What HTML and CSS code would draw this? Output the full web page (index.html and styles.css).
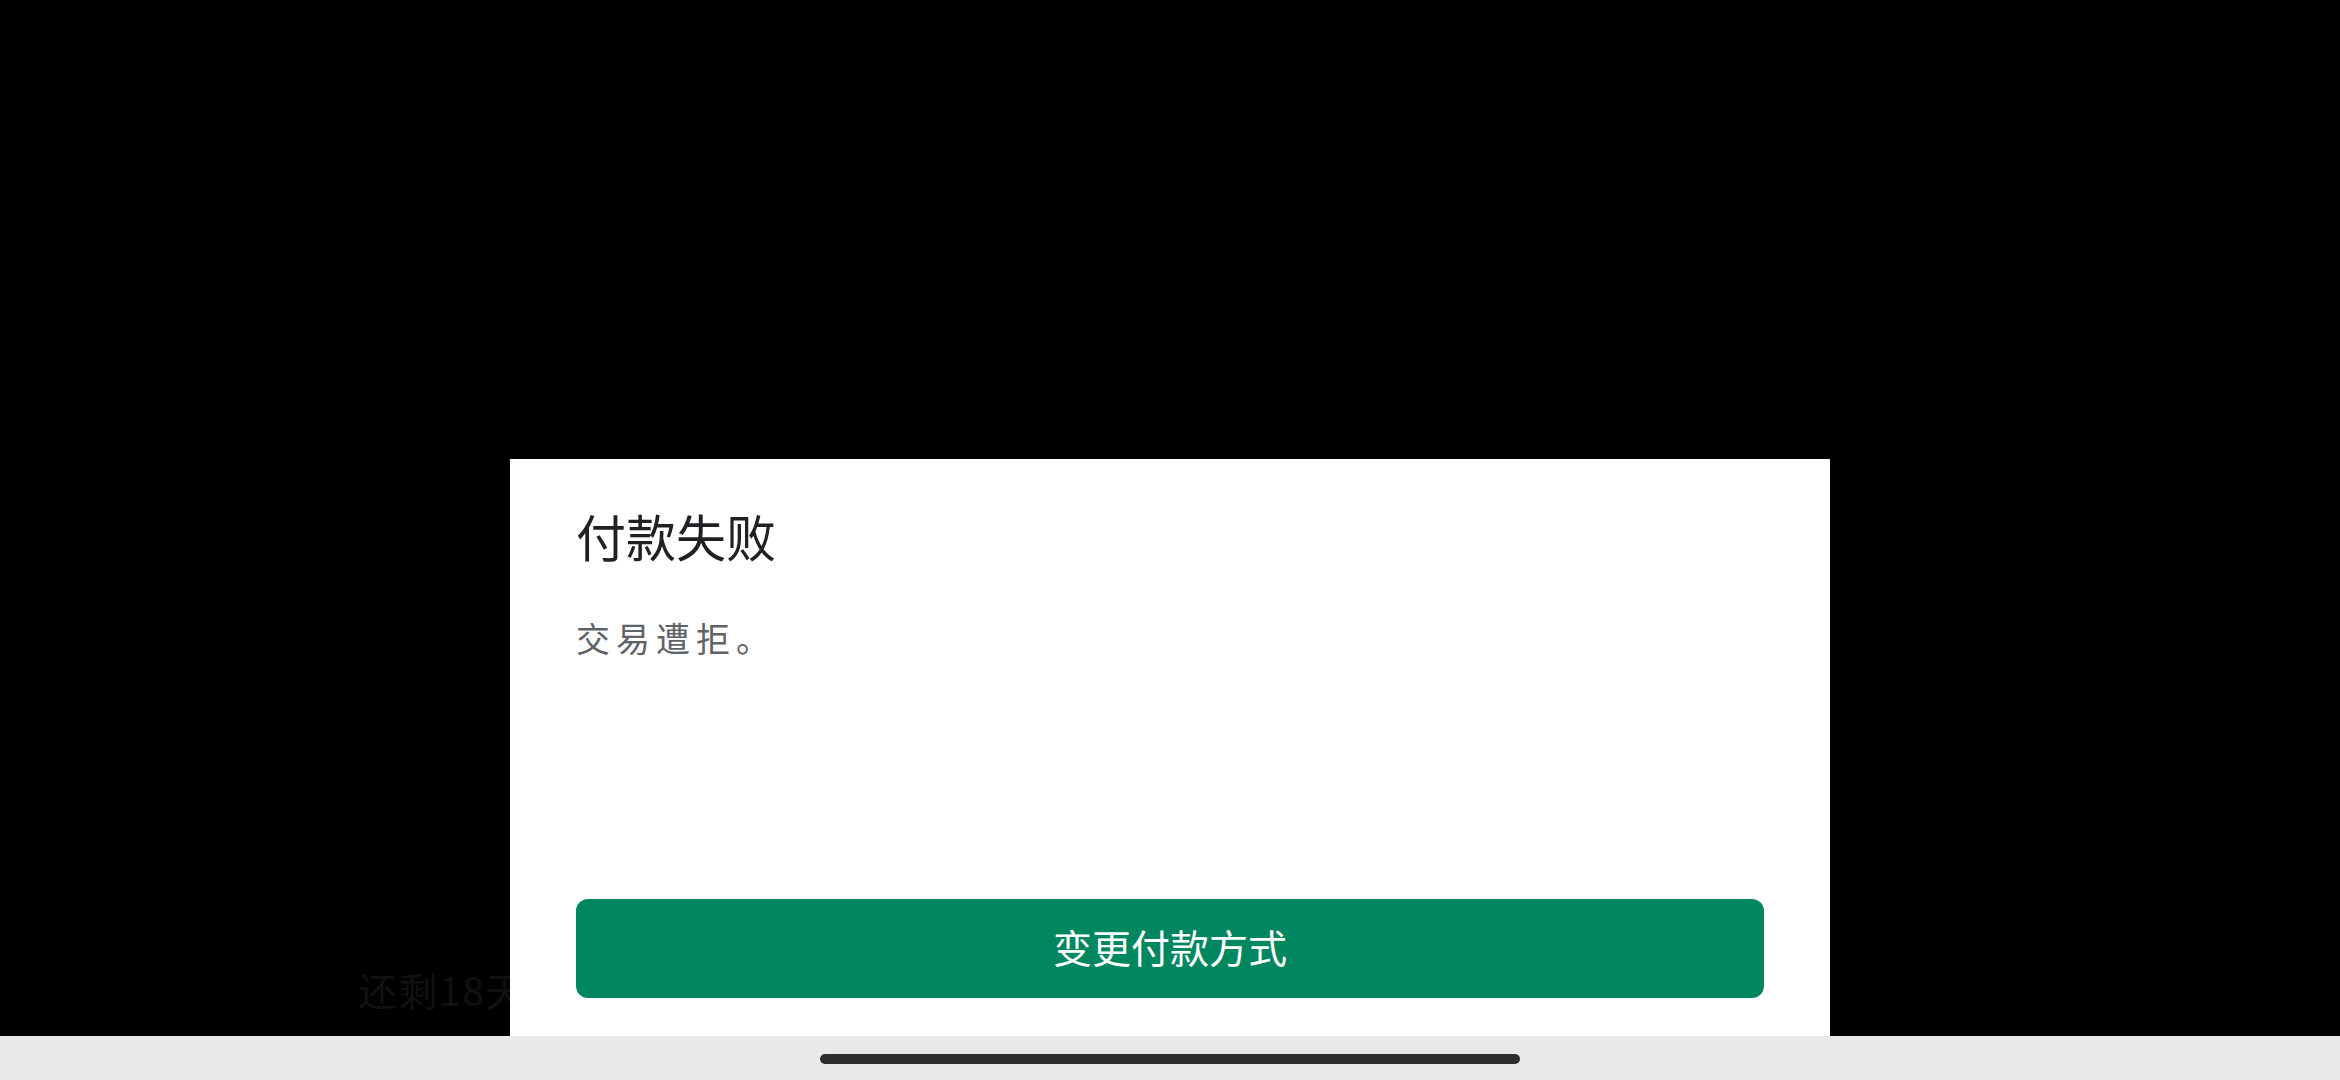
FILE: index.html
```html
<!DOCTYPE html>
<html lang="zh-CN">
<head>
<meta charset="utf-8">
<title>付款失败</title>
<link rel="stylesheet" href="styles.css">
</head>
<body>
<main class="stage">
  <span class="ghost">还剩18天</span>
  <section class="sheet">
    <h1 class="title">付款失败</h1>
    <p class="message">交易遭拒。</p>
    <button class="action">变更付款方式</button>
  </section>
</main>
<footer class="navbar"><span class="handle"></span></footer>
</body>
</html>
```
FILE: styles.css
```css
* { box-sizing: border-box; }
html, body { margin: 0; height: 100%; }
body {
  display: flex;
  flex-direction: column;
  height: 1080px;
  overflow: hidden;
  background: #000;
  font-family: "Noto Sans CJK SC", "Liberation Sans", sans-serif;
}
.stage {
  position: relative;
  flex: 1;
  display: flex;
  justify-content: center;
  align-items: flex-end;
  background: #000;
}
.ghost {
  position: absolute;
  left: 358px;
  top: 961px;
  font-size: 39px;
  line-height: 56px;
  letter-spacing: 1.5px;
  color: #111;
  white-space: nowrap;
}
.sheet {
  position: relative;
  width: 1320px;
  height: 577px;
  padding: 41px 66px 38px;
  display: flex;
  flex-direction: column;
  background: #fff;
}
.title {
  margin: 0;
  font-size: 50px;
  line-height: 70px;
  font-weight: 400;
  color: #202124;
}
.message {
  margin: 44px 0 0;
  font-size: 34px;
  line-height: 48px;
  font-weight: 400;
  letter-spacing: 6px;
  color: #5f6368;
}
.action {
  margin-top: auto;
  height: 99px;
  padding: 0 0 5px;
  border: 0;
  border-radius: 12px;
  background: #01875f;
  color: #fff;
  font-family: inherit;
  font-size: 39px;
  font-weight: 400;
}
.navbar {
  height: 44px;
  flex: none;
  display: flex;
  justify-content: center;
  align-items: center;
  padding-top: 1px;
  background: #e9e9e9;
}
.handle {
  width: 700px;
  height: 10px;
  border-radius: 5px;
  background: #2d2d2d;
}
```
